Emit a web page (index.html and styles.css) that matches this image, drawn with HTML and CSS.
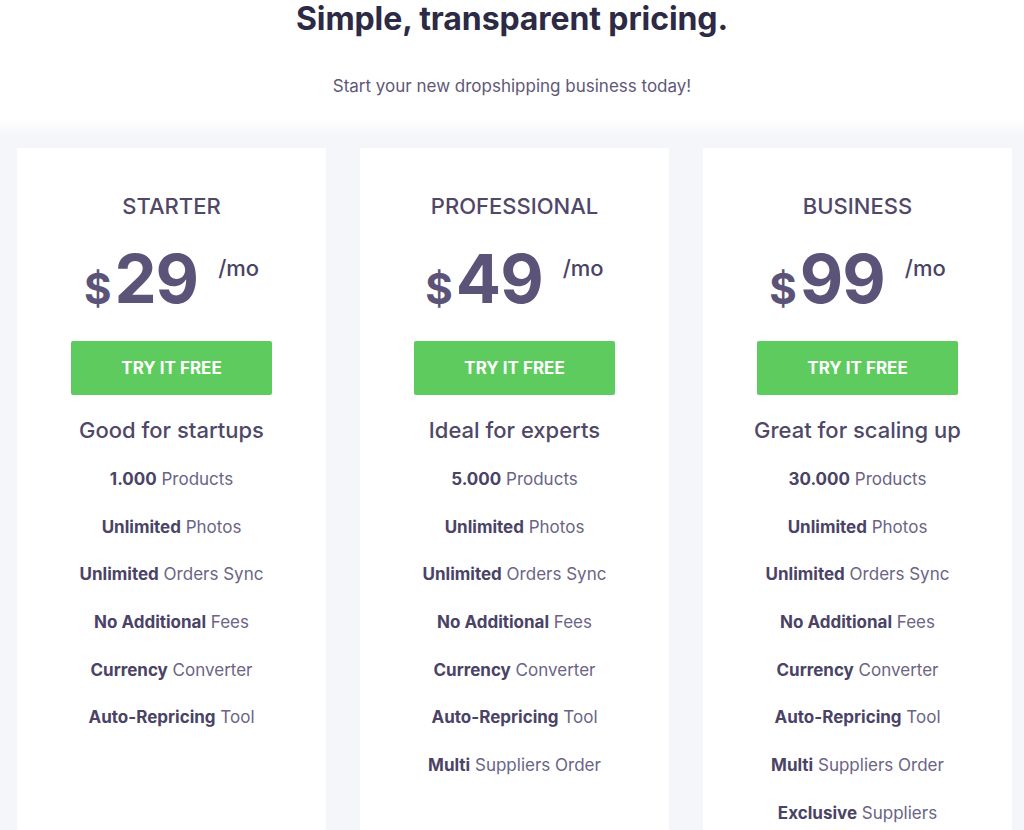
FILE: index.html
```html
<!DOCTYPE html>
<html lang="en">
<head>
<meta charset="utf-8">
<title>Pricing</title>
<link rel="stylesheet" href="styles.css">
</head>
<body>
<header class="intro">
  <h1 class="title">Simple, transparent pricing.</h1>
  <p class="subtitle">Start your new dropshipping business today!</p>
</header>
<section class="plans">
  <div class="card">
    <h2 class="plan-name">STARTER</h2>
    <div class="price"><span class="cur">$</span><span class="amount">29</span><span class="per">/mo</span></div>
    <a class="btn" href="#">TRY IT FREE</a>
    <h3 class="tagline">Good for startups</h3>
    <ul class="features">
      <li><b>1.000</b> Products</li>
      <li><b>Unlimited</b> Photos</li>
      <li><b>Unlimited</b> Orders Sync</li>
      <li><b>No Additional</b> Fees</li>
      <li><b>Currency</b> Converter</li>
      <li><b>Auto-Repricing</b> Tool</li>
    </ul>
  </div>
  <div class="card">
    <h2 class="plan-name">PROFESSIONAL</h2>
    <div class="price"><span class="cur">$</span><span class="amount">49</span><span class="per">/mo</span></div>
    <a class="btn" href="#">TRY IT FREE</a>
    <h3 class="tagline">Ideal for experts</h3>
    <ul class="features">
      <li><b>5.000</b> Products</li>
      <li><b>Unlimited</b> Photos</li>
      <li><b>Unlimited</b> Orders Sync</li>
      <li><b>No Additional</b> Fees</li>
      <li><b>Currency</b> Converter</li>
      <li><b>Auto-Repricing</b> Tool</li>
      <li><b>Multi</b> Suppliers Order</li>
    </ul>
  </div>
  <div class="card">
    <h2 class="plan-name">BUSINESS</h2>
    <div class="price"><span class="cur">$</span><span class="amount">99</span><span class="per">/mo</span></div>
    <a class="btn" href="#">TRY IT FREE</a>
    <h3 class="tagline">Great for scaling up</h3>
    <ul class="features">
      <li><b>30.000</b> Products</li>
      <li><b>Unlimited</b> Photos</li>
      <li><b>Unlimited</b> Orders Sync</li>
      <li><b>No Additional</b> Fees</li>
      <li><b>Currency</b> Converter</li>
      <li><b>Auto-Repricing</b> Tool</li>
      <li><b>Multi</b> Suppliers Order</li>
      <li><b>Exclusive</b> Suppliers</li>
    </ul>
  </div>
</section>
</body>
</html>
```

FILE: styles.css
```css
* { box-sizing: border-box; }
html, body { margin: 0; padding: 0; background: #fff; }
body {
  font-family: Inter, "Noto Sans", sans-serif;
  color: #5a5275;
  overflow: hidden;
}
.intro { text-align: center; }
.title {
  margin: 0;
  font-size: 32px;
  line-height: 38px;
  font-weight: 700;
  color: #2c2a44;
  letter-spacing: -0.1px;
}
.subtitle {
  margin: 38px 0 0;
  font-size: 17px;
  line-height: 20px;
  color: #5e5878;
}
.plans {
  margin-top: 24px;
  padding: 28px 12px 0 17px;
  display: flex;
  gap: 34px;
  background: linear-gradient(to bottom, #fff 0, #f5f6fa 16px, #f5f6fa 100%);
  height: 800px;
}
.card {
  width: 309px;
  flex: 0 0 309px;
  background: #fff;
  text-align: center;
  padding-top: 44px;
}
.plan-name {
  margin: 0;
  font-size: 22px;
  line-height: 28px;
  font-weight: 500;
  color: #4f4868;
}
.price {
  margin-top: 21px;
  height: 76px;
  display: flex;
  justify-content: center;
  align-items: flex-start;
  color: #5b5378;
  font-weight: 700;
}
.cur { font-size: 42px; line-height: 42px; margin-top: 27px; margin-right: 3px; }
.amount { font-size: 67px; line-height: 76px; letter-spacing: -1px; }
.per { font-size: 22px; line-height: 24px; margin-top: 15px; margin-left: 20px; font-weight: 500; color: #4a4366; }
.btn {
  display: flex;
  align-items: center;
  justify-content: center;
  width: 201px;
  height: 54px;
  margin: 24px auto 0;
  background: #5dcb5d;
  color: #fff;
  font-weight: 700;
  font-size: 17px;
  text-decoration: none;
  border-radius: 2px;
}
.tagline {
  margin: 22px 0 0;
  font-size: 22px;
  line-height: 26px;
  font-weight: 500;
  color: #4f4868;
}
.features {
  list-style: none;
  margin: 26px 0 0;
  padding: 0;
  display: flex;
  flex-direction: column;
  gap: 27.7px;
}
.features li {
  font-size: 17px;
  line-height: 20px;
  color: #6a6485;
}
.features b { font-weight: 700; color: #4a4366; }
```
